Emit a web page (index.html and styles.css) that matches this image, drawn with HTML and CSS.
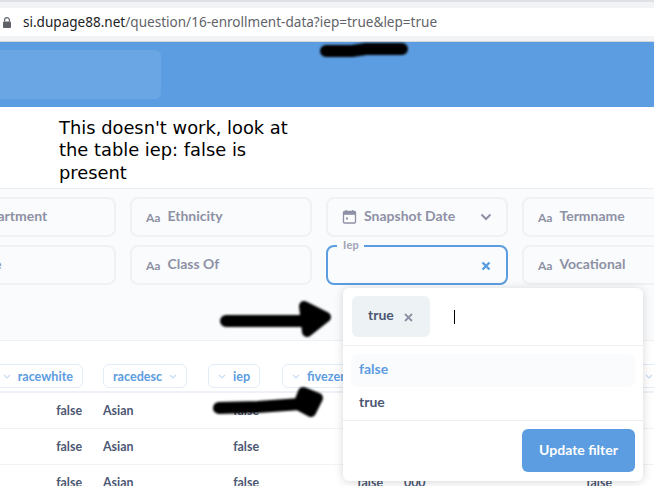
FILE: index.html
```html
<!DOCTYPE html>
<html lang="en">
<head>
<meta charset="utf-8">
<title>16 enrollment data</title>
<link rel="stylesheet" href="styles.css">
</head>
<body>
<div class="page">
  <div class="chrome-top"></div>
  <div class="urlbar">
    <svg class="lock" width="8" height="11" viewBox="0 0 8 11"><path d="M1.6 4.5V3a2.4 2.4 0 0 1 4.8 0v1.5" fill="none" stroke="#5f6368" stroke-width="1.2"/><rect x="0" y="4.5" width="8" height="6.5" rx="1" fill="#5f6368"/></svg>
    <span class="url"><span class="host">si.dupage88.net</span>/question/16-enrollment-data?iep=true&amp;lep=true</span>
  </div>
  <div class="chrome-bottom"></div>
  <header class="appbar"><div class="search"></div></header>
  <div class="caption">This doesn't work, look at<br>the table iep: false is<br>present</div>
  <section class="filters">
    <div class="filter-grid">
      <div class="filter"><span class="aa">Aa</span><span class="name">Department</span></div>
      <div class="filter"><span class="aa">Aa</span><span class="name">Ethnicity</span></div>
      <div class="filter"><svg class="cal" width="15" height="15" viewBox="0 0 15 15"><path d="M2.5 2.5h10a1 1 0 0 1 1 1v9.500a1 1 0 0 1-1 1h-10a1 1 0 0 1-1-1V3.500a1 1 0 0 1 1-1z" fill="none" stroke="#8e91a5" stroke-width="1.300"/><path d="M1.500 3h12v2.800h-12z" fill="#8e91a5"/><path d="M4.300 1v2M10.700 1v2" stroke="#8e91a5" stroke-width="1.300"/><rect x="4" y="8.500" width="2" height="2" fill="#8e91a5"/></svg><span class="name">Snapshot Date</span><svg class="chev" width="12" height="8" viewBox="0 0 12 8"><path d="M1.500 1.500L6 6l4.500-4.500" fill="none" stroke="#8e91a5" stroke-width="2"/></svg></div>
      <div class="filter"><span class="aa">Aa</span><span class="name">Termname</span></div>
      <div class="filter"><span class="aa">Aa</span><span class="name">Race</span></div>
      <div class="filter"><span class="aa">Aa</span><span class="name">Class Of</span></div>
      <div class="filter active"><span class="legend">Iep</span><svg class="clear" width="10" height="10" viewBox="0 0 10 10"><path d="M1.500 1.500l7 7M8.500 1.500l-7 7" fill="none" stroke="#5c9ce0" stroke-width="2.400"/></svg></div>
      <div class="filter"><span class="aa">Aa</span><span class="name">Vocational</span></div>
    </div>
  </section>
  <section class="table">
    <div class="row head">
      <div class="cell"><span class="pill"><svg class="pchev" width="8" height="5" viewBox="0 0 8 5"><path d="M1 1l3 3 3-3" fill="none" stroke="#c5dcf3" stroke-width="1.200"/></svg>racewhite</span></div>
      <div class="cell"><span class="pill">racedesc<svg class="pchev" width="8" height="5" viewBox="0 0 8 5"><path d="M1 1l3 3 3-3" fill="none" stroke="#c5dcf3" stroke-width="1.200"/></svg></span></div>
      <div class="cell"><span class="pill"><svg class="pchev" width="8" height="5" viewBox="0 0 8 5"><path d="M1 1l3 3 3-3" fill="none" stroke="#c5dcf3" stroke-width="1.200"/></svg>iep</span></div>
      <div class="cell"><span class="pill"><svg class="pchev" width="8" height="5" viewBox="0 0 8 5"><path d="M1 1l3 3 3-3" fill="none" stroke="#c5dcf3" stroke-width="1.200"/></svg>fivezero</span></div>
      <div class="cell"></div>
      <div class="cell"></div>
      <div class="cell"><span class="pill wide"><svg class="pchev" width="8" height="5" viewBox="0 0 8 5"><path d="M1 1l3 3 3-3" fill="none" stroke="#c5dcf3" stroke-width="1.200"/></svg></span></div>
    </div>
    <div class="row"><div class="cell r">false</div><div class="cell">Asian</div><div class="cell r r3">false</div><div class="cell"></div><div class="cell"></div><div class="cell"></div><div class="cell"></div></div>
    <div class="row"><div class="cell r">false</div><div class="cell">Asian</div><div class="cell r r3">false</div><div class="cell"></div><div class="cell"></div><div class="cell"></div><div class="cell"></div></div>
    <div class="row"><div class="cell r">false</div><div class="cell">Asian</div><div class="cell r r3">false</div><div class="cell r">false</div><div class="cell">000</div><div class="cell r">false</div><div class="cell"></div></div>
  </section>

  <div class="popover">
    <div class="pop-top">
      <span class="tag">true<svg width="9" height="9" viewBox="0 0 9 9"><path d="M1 1l7 7M8 1l-7 7" fill="none" stroke="#8e91a5" stroke-width="1.800"/></svg></span>
      <span class="cursor"></span>
    </div>
    <div class="options">
      <div class="opt on">false</div>
      <div class="opt">true</div>
    </div>
    <div class="pop-foot"><button class="update">Update filter</button></div>
  </div>

  <svg class="scribbles" width="654" height="486" viewBox="0 0 654 486">
    <defs><filter id="soft"><feGaussianBlur stdDeviation="0.900"/></filter></defs>
    <g filter="url(#soft)" fill="none" stroke="#000" stroke-linecap="round" stroke-linejoin="round">
      <path d="M326 51 L352 51 L366 49 L402 49" stroke-width="12"/>
      <path d="M226 321 L300 321 L318 319" stroke-width="12"/>
      <path d="M304 306 L326 317 L307 332 Z" stroke-width="10" fill="#000"/>
      <path d="M219 408 L258 407 L300 404" stroke-width="12"/>
      <path d="M303 392 L318 398 L311 412 L298 405 Z" stroke-width="10" fill="#000"/>
    </g>
  </svg>
</div>
</body>
</html>
```
FILE: styles.css
```css
* { box-sizing: border-box; }
html, body { margin: 0; padding: 0; }
body { font-family: Lato, "Liberation Sans", sans-serif; background: #fff; }
.page { position: relative; width: 654px; height: 486px; overflow: hidden; background: #fff; }

.chrome-top { height: 8px; background: #f1f3f4; border-top: 2px solid #dee1e6; }
.urlbar { height: 28px; background: #fff; display: flex; align-items: center; gap: 12px; padding-left: 3px; }
.lock { flex: none; }
.url { font-family: "Noto Sans", sans-serif; font-size: 13.56px; color: #5f6368; white-space: nowrap; }
.host { color: #202124; }
.chrome-bottom { height: 6px; background: #f1f3f4; border-bottom: 1px solid #d5d7da; }
.appbar { height: 65px; background: #5c9ce0; padding-top: 8px; }
.search { width: 161px; height: 49px; background: #6ba6e4; border-radius: 0 6px 6px 0; }

.caption { height: 82px; padding: 10px 0 0 59px; font-family: "DejaVu Sans", sans-serif; font-size: 17.85px; line-height: 22.400px; color: #000; border-bottom: 1px solid #eceef0; }

.filters { height: 152px; background: #f9fbfc; padding-top: 8px; overflow: hidden; border-bottom: 1px solid #eef0f2; }
.filter-grid { display: grid; grid-template-columns: repeat(4, 182px); grid-auto-rows: 40px; column-gap: 14px; row-gap: 8px; margin-left: -66px; width: 780px; }
.filter { position: relative; display: flex; align-items: center; border: 2px solid #f0f1f3; border-radius: 8px; padding: 0 12px 4px 14px; color: #8e91a5; font-size: 14px; font-weight: 700; }
.aa { font-size: 12px; margin-right: 7px; padding-top: 5px; }
.name { white-space: nowrap; }
.cal { margin-right: 7px; margin-top: 2px; }
.chev { margin-left: auto; margin-right: 2px; margin-top: 3px; }
.filter.active { border-color: #5c9ce0; }
.legend { position: absolute; top: -10px; left: 9px; background: #f9fbfc; padding: 0 5px 0 6px; font-size: 11px; font-weight: 700; line-height: 16px; color: #a0a3b4; letter-spacing: .3px; }
.clear { margin-left: auto; margin-top: 5px; margin-right: 3px; }

.row { display: grid; grid-template-columns: 83px 85px 54px 102px 162px 27px 60px; column-gap: 20px; height: 36px; align-items: center; font-size: 12.4px; color: #4c5773; font-weight: 700; border-bottom: 1px solid #f2f3f5; }
.row .cell { white-space: nowrap; }
.row .r { text-align: right; padding-right: 1px; }
.row .r3 { padding-right: 3px; }
.row.head { height: 52px; padding-top: 20px; border-bottom: 2px solid #eef2f8; }
.pill { display: inline-flex; align-items: center; gap: 7px; height: 24px; padding: 0 9px; border: 1px solid #e2edf9; border-radius: 6px; color: #5c9ce0; font-size: 12.6px; background: #fff; }
.pill.wide { width: 60px; padding-left: 11px; }
.row.head .cell:first-child { display: flex; justify-content: flex-end; }
.pchev { flex: none; }

.popover { position: absolute; left: 343px; top: 288px; width: 300px; height: 193px; background: #fff; border-radius: 6px; box-shadow: 0 1px 10px rgba(0,0,0,.16); display: flex; flex-direction: column; }
.pop-top { height: 58px; flex: none; display: flex; align-items: center; padding: 0 9px; border-bottom: 1px solid #eceef0; }
.tag { width: 78px; height: 41px; background: #edf2f5; border-radius: 6px; display: flex; align-items: center; gap: 10px; padding: 0 0 4px 16px; color: #4c5773; font-size: 14px; font-weight: 700; }
.tag svg { margin-top: 5px; }
.cursor { width: 1px; height: 14px; background: #000; margin-left: 24px; }
.options { padding: 8px 8px 0; height: 75px; flex: none; border-bottom: 1px solid #eceef0; }
.opt { height: 33px; padding: 0 8px 5px; display: flex; align-items: center; font-size: 14px; font-weight: 700; color: #4c5773; border-radius: 6px; }
.opt.on { color: #5c9ce0; background: #f9fbfc; }
.pop-foot { display: flex; justify-content: flex-end; padding: 8px; }
.update { width: 113px; height: 43px; border: 0; border-radius: 6px; background: #5c9ce0; color: #fff; padding: 0 0 3px; font: 700 14px Lato, sans-serif; }

.scribbles { position: absolute; left: 0; top: 0; pointer-events: none; }
```
